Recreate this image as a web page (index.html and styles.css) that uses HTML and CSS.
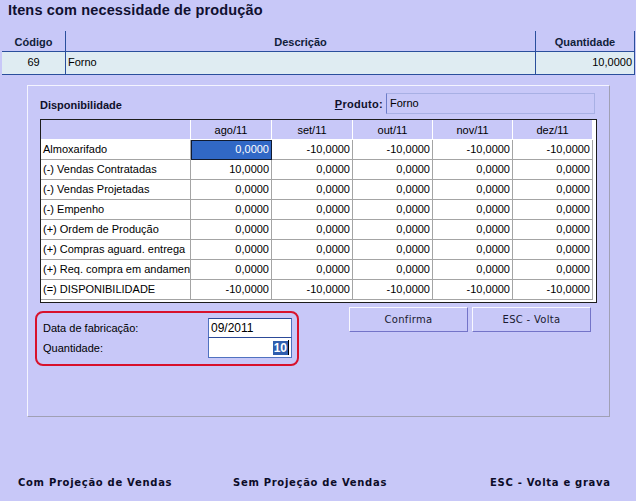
FILE: index.html
```html
<!DOCTYPE html>
<html lang="pt">
<head>
<meta charset="utf-8">
<title>Itens com necessidade de produção</title>
<link rel="stylesheet" href="styles.css">
</head>
<body>
<div class="title">Itens com necessidade de produção</div>

<div class="items">
  <div class="items-row items-head">
    <div class="c-cod">Código</div>
    <div class="c-desc">Descrição</div>
    <div class="c-qty">Quantidade</div>
  </div>
  <div class="items-row items-data">
    <div class="c-cod">69</div>
    <div class="c-desc">Forno</div>
    <div class="c-qty">10,0000</div>
  </div>
</div>

<div class="panel">
  <div class="panel-head">
    <span class="panel-title">Disponibilidade</span>
    <span class="prod-label"><u>P</u>roduto:</span>
    <div class="prod-input">Forno</div>
  </div>

  <div class="grid">
    <div class="cell hd"></div>
    <div class="cell hd">ago/11</div>
    <div class="cell hd">set/11</div>
    <div class="cell hd">out/11</div>
    <div class="cell hd">nov/11</div>
    <div class="cell hd">dez/11</div>

    <div class="cell lbl">Almoxarifado</div>
    <div class="cell num sel">0,0000</div>
    <div class="cell num">-10,0000</div>
    <div class="cell num">-10,0000</div>
    <div class="cell num">-10,0000</div>
    <div class="cell num">-10,0000</div>

    <div class="cell lbl">(-) Vendas Contratadas</div>
    <div class="cell num">10,0000</div>
    <div class="cell num">0,0000</div>
    <div class="cell num">0,0000</div>
    <div class="cell num">0,0000</div>
    <div class="cell num">0,0000</div>

    <div class="cell lbl">(-) Vendas Projetadas</div>
    <div class="cell num">0,0000</div>
    <div class="cell num">0,0000</div>
    <div class="cell num">0,0000</div>
    <div class="cell num">0,0000</div>
    <div class="cell num">0,0000</div>

    <div class="cell lbl">(-) Empenho</div>
    <div class="cell num">0,0000</div>
    <div class="cell num">0,0000</div>
    <div class="cell num">0,0000</div>
    <div class="cell num">0,0000</div>
    <div class="cell num">0,0000</div>

    <div class="cell lbl">(+) Ordem de Produção</div>
    <div class="cell num">0,0000</div>
    <div class="cell num">0,0000</div>
    <div class="cell num">0,0000</div>
    <div class="cell num">0,0000</div>
    <div class="cell num">0,0000</div>

    <div class="cell lbl">(+) Compras aguard. entrega</div>
    <div class="cell num">0,0000</div>
    <div class="cell num">0,0000</div>
    <div class="cell num">0,0000</div>
    <div class="cell num">0,0000</div>
    <div class="cell num">0,0000</div>

    <div class="cell lbl">(+) Req. compra em andamento</div>
    <div class="cell num">0,0000</div>
    <div class="cell num">0,0000</div>
    <div class="cell num">0,0000</div>
    <div class="cell num">0,0000</div>
    <div class="cell num">0,0000</div>

    <div class="cell lbl">(=) DISPONIBILIDADE</div>
    <div class="cell num">-10,0000</div>
    <div class="cell num">-10,0000</div>
    <div class="cell num">-10,0000</div>
    <div class="cell num">-10,0000</div>
    <div class="cell num">-10,0000</div>
  </div>

  <div class="lower">
    <div class="redbox">
      <div class="field">
        <span class="field-label">Data de fabricação:</span>
        <div class="inp">09/2011</div>
      </div>
      <div class="field">
        <span class="field-label">Quantidade:</span>
        <div class="inp inp-qty"><span class="hilite">10</span><span class="caret"></span></div>
      </div>
    </div>
    <div class="buttons">
      <button class="btn">Confirma</button>
      <button class="btn">ESC - Volta</button>
    </div>
  </div>
</div>

<div class="footer">
  <span class="foot-item">Com Projeção de Vendas</span>
  <span class="foot-item">Sem Projeção de Vendas</span>
  <span class="foot-item">ESC - Volta e grava</span>
</div>
</body>
</html>
```

FILE: styles.css
```css
* { box-sizing: border-box; }

html, body {
  margin: 0;
  padding: 0;
  background: #c8c8f8;
}

body {
  width: 636px;
  height: 501px;
  overflow: hidden;
  font-family: "Liberation Sans", Arial, sans-serif;
  font-size: 11px;
  color: #000;
}

.title {
  height: 31px;
  padding: 0 8px;
  line-height: 20px;
  font-size: 14.5px;
  letter-spacing: 0.15px;
  font-weight: bold;
  color: #101030;
}

/* top items table */
.items {
  margin: 0 2px 0 2px;
  width: 633px;
}

.items-row {
  display: grid;
  grid-template-columns: 63px 470px 100px;
}

.items-head {
  height: 21px;
  border-bottom: 1px solid #2a4f9c;
  font-weight: bold;
  color: #10203a;
}

.items-head > div {
  line-height: 22px;
  text-align: center;
}

.items-data {
  height: 23px;
  background: #dfecf2;
  border-bottom: 1px solid #2a4f9c;
}

.items-data > div {
  line-height: 21px;
  padding: 0 2px;
}

.items-row .c-desc,
.items-row .c-qty {
  border-left: 1px solid #2a4f9c;
}

.items-row .c-qty {
  border-right: 1px solid #2a4f9c;
}

.items-data .c-cod { text-align: center; }
.items-data .c-qty { text-align: right; }

/* panel */
.panel {
  margin: 10px 0 0 27px;
  width: 583px;
  height: 332px;
  padding: 7px 11px 0 12px;
  border: 1px solid;
  border-color: #f4f4ff #a0a0b4 #a0a0b4 #f4f4ff;
}

.panel-head {
  display: flex;
  align-items: center;
  height: 21px;
  margin-right: 3px;
}

.panel-title {
  font-weight: bold;
  color: #10102a;
  margin-top: 2px;
  flex: 1;
}

.prod-label {
  font-weight: bold;
  color: #10102a;
  margin-right: 3px;
  letter-spacing: 0.3px;
}

.prod-input {
  width: 209px;
  height: 21px;
  padding: 0 3px;
  line-height: 19px;
  border: 1px solid #a8b0e4;
  border-left-color: #6c7cc8;
}

/* availability grid */
.grid {
  margin-top: 5px;
  width: 557px;
  height: 184px;
  border: 1px solid #1c1c1c;
  padding: 0 3px 2px 0;
  display: grid;
  grid-template-columns: 150px 81px 81px 80px 80px 80px;
  grid-auto-rows: 20px;
  background: #fff;
}

.cell {
  border-right: 1px solid #a4a4a4;
  border-bottom: 1px solid #a4a4a4;
  line-height: 19px;
  white-space: nowrap;
  overflow: hidden;
  background: #fff;
}

.cell.hd {
  background: #c8c8f8;
  border-right: 1px solid #fff;
  border-bottom: 1px solid #fff;
  text-align: center;
  line-height: 20px;
}

.cell.lbl {
  padding-left: 2px;
  text-overflow: clip;
}

.cell.num {
  text-align: right;
  padding-right: 2px;
}

.cell.sel {
  background: #3168c6;
  color: #fff;
  border: 1px solid #101a30;
  line-height: 17px;
}

/* lower part */
.lower {
  display: flex;
  align-items: flex-start;
  margin-top: 4px;
}

.redbox {
  margin: 4px 0 0 -5px;
  width: 264px;
  height: 55px;
  border: 2px solid #d8122c;
  border-radius: 8px;
  padding: 5px 5px 0 6px;
}

.field {
  display: flex;
  align-items: center;
  justify-content: space-between;
}

.field + .field {
  margin-top: -1px;
}

.inp {
  width: 84px;
  height: 20px;
  background: #fff;
  border: 1px solid #5072c0;
  border-top-color: #2c4a98;
  line-height: 18px;
  padding: 0 2px;
  font-size: 12px;
}

.inp-qty {
  height: 21px;
  display: flex;
  justify-content: flex-end;
  align-items: center;
  padding-right: 2px;
}

.hilite {
  background: #2f5eae;
  color: #fff;
  font-weight: bold;
  line-height: 14px;
  padding: 0 1px;
}

.caret {
  width: 1px;
  height: 15px;
  background: #000;
}

.buttons {
  margin-left: auto;
  margin-right: 7px;
  display: flex;
  gap: 4px;
}

.btn {
  width: 119px;
  height: 25px;
  background: #c8c8f8;
  border: 1px solid;
  border-color: #f8f8ff #7474c8 #7474c8 #f8f8ff;
  font-family: "DejaVu Sans", Verdana, sans-serif;
  font-size: 10px;
  letter-spacing: 0.3px;
  color: #1a1a30;
  padding: 0;
}

/* footer */
.footer {
  display: grid;
  grid-template-columns: 215px 257px auto;
  padding-left: 18px;
  margin-top: 59px;
  line-height: 14px;
}

.foot-item {
  font-family: "DejaVu Sans", Verdana, sans-serif;
  font-weight: bold;
  font-size: 10px;
  letter-spacing: 0.7px;
  color: #0c0c28;
}
```
